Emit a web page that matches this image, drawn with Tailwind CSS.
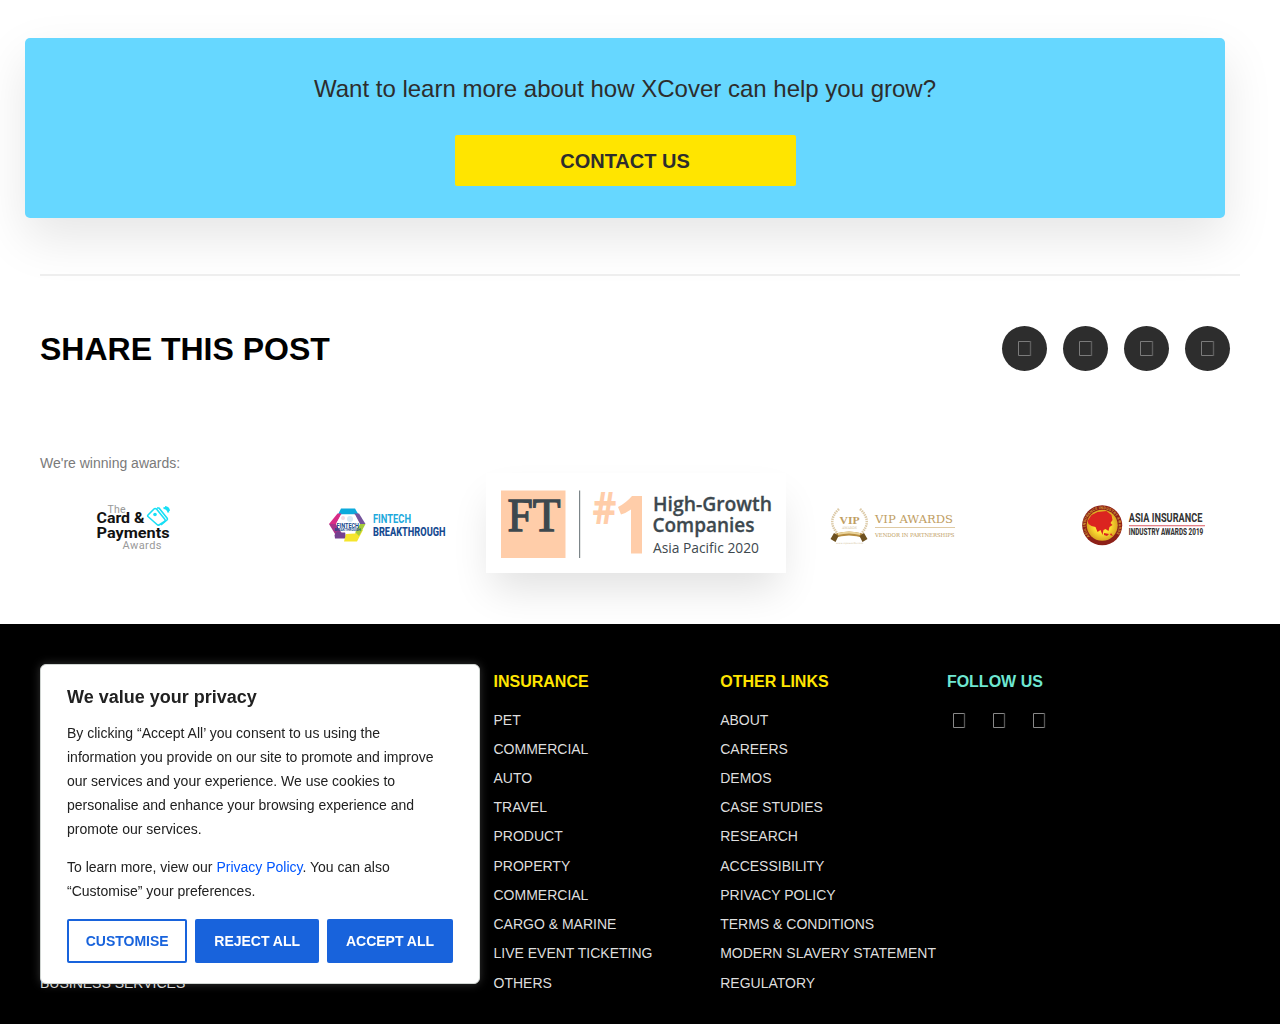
<!DOCTYPE html>
<html lang="en">
<head>
<meta charset="utf-8">
<title>XCover</title>
<script src="https://cdn.jsdelivr.net/npm/@tailwindcss/browser@4"></script>
</head>
<body class="relative h-[1024px] w-[1280px] overflow-hidden bg-white font-['Liberation_Sans',Arial,sans-serif] text-[#2d2d2d]">
<main class="h-[623.5px] pt-[38.4px]">
  <section class="ml-[25px] flex h-[180px] w-[1200px] flex-col items-center rounded-[5px] bg-[#66d7ff] pt-[33px] shadow-[0_20px_50px_rgba(0,0,0,0.1)]">
    <h3 class="text-2xl leading-9">Want to learn more about how XCover can help you grow?</h3>
    <a class="mt-[27.5px] flex h-[51px] w-[341px] items-center justify-center rounded-[2px] bg-[#ffe500] pt-px text-xl font-bold">CONTACT US</a>
  </section>
  <hr class="mx-10 mt-[55.6px] border-0 border-t-2 border-[#eee]">
  <section class="flex items-center justify-between pt-[50px] pr-[50px] pl-10">
    <h2 class="pt-px text-[32px] leading-[44px] font-bold text-black">SHARE THIS POST</h2>
    <div class="flex gap-4">
      <a class="size-[45px] rounded-full bg-[#2d2d2d]"><svg class="size-[45px]" fill="none" stroke="#7b7b7b"><path d="M28.500 15.500h-12v14h12"/><path d="M28.500 15v15" stroke="#5d5d5d" stroke-width="1.400"/></svg></a>
      <a class="size-[45px] rounded-full bg-[#2d2d2d]"><svg class="size-[45px]" fill="none" stroke="#7b7b7b"><path d="M28.500 15.500h-12v14h12"/><path d="M28.500 15v15" stroke="#5d5d5d" stroke-width="1.400"/></svg></a>
      <a class="size-[45px] rounded-full bg-[#2d2d2d]"><svg class="size-[45px]" fill="none" stroke="#7b7b7b"><path d="M28.500 15.500h-12v14h12"/><path d="M28.500 15v15" stroke="#5d5d5d" stroke-width="1.400"/></svg></a>
      <a class="size-[45px] rounded-full bg-[#2d2d2d]"><svg class="size-[45px]" fill="none" stroke="#7b7b7b"><path d="M28.500 15.500h-12v14h12"/><path d="M28.500 15v15" stroke="#5d5d5d" stroke-width="1.400"/></svg></a>
    </div>
  </section>
  <p class="mt-[82px] ml-10 text-sm leading-5 text-[#7a7a7a]">We're winning awards:</p>
  <section class="flex h-[100px] items-start">
    <svg class="mt-[17px] ml-20 h-[70px] w-[110px] shrink-0" viewBox="80 490 110 70" font-family="Roboto, sans-serif">
      <text x="107.500" y="512.500" font-size="10.500" fill="#999" textLength="18">The</text>
      <text x="96.500" y="523" font-size="15" font-weight="700" fill="#111" textLength="48" lengthAdjust="spacingAndGlyphs">Card &amp;</text>
      <text x="96.500" y="537.500" font-size="15" font-weight="700" fill="#111" textLength="73" lengthAdjust="spacingAndGlyphs">Payments</text>
      <text x="122.500" y="549" font-size="11" fill="#999" textLength="39">Awards</text>
      <g fill="none" stroke="#18dff5" stroke-width="1.600" stroke-linejoin="round">
        <path d="M148 515l6-6q1-1 2.500 0l8.500 10.500q.5 1-.5 2l-5.500 3.500q-1 .5-2-.5l-9-8q-.7-.8 0-1.500z"/>
        <path d="M157 508l2 0 8 10q.8 1.200 0 2l-6 5"/>
        <path d="M163.500 508q4 0 5 4.500M165 507q4 .5 4 4" stroke-width="1.800"/>
      </g><circle cx="155" cy="514.500" r="1.800" fill="#18dff5"/>
    </svg>
    <svg class="mt-[22px] ml-[130px] h-[60px] w-[140px] shrink-0" viewBox="320 495 140 60" font-family="Roboto, sans-serif">
      <path d="M341 508.500h14l3.500 6H338z" fill="#0caadc"/>
      <path d="M337.500 513.500h4L336 524h-7z" fill="#d82b86"/>
      <path d="M329 524h7l5 8-3.500 6z" fill="#a73388"/>
      <path d="M334.500 535l2.500-3.500h8l1 7-11 0z" fill="#754090"/>
      <path d="M346 534l9-.5 3-4.500 5 1-6 11.500H344z" fill="#f5e52c"/>
      <path d="M358 523l7.500 1-6.500 12-4-4z" fill="#a5cb3b"/>
      <path d="M354 513.500l5 0 6.500 10.500h-6z" fill="#74539c"/>
      <path d="M341.500 514.500h13.500l5 9.500-5 8.500h-13.500l-5.500-8.500z" fill="#fff"/>
      <circle cx="350" cy="519" r="3" fill="#d7e9f5"/><circle cx="343" cy="518" r="2" fill="#f5d9e4"/>
      <text x="336.500" y="527.500" font-size="6.500" font-weight="700" fill="#184a8d" textLength="22.500" lengthAdjust="spacingAndGlyphs">FINTECH</text>
      <text x="334.500" y="531.300" font-size="3.500" font-weight="700" fill="#184a8d" textLength="26" lengthAdjust="spacingAndGlyphs">BREAKTHROUGH</text>
      <text x="373" y="522.500" font-size="12.500" font-weight="700" fill="#20a9dc" textLength="38" lengthAdjust="spacingAndGlyphs">FINTECH</text>
      <text x="373" y="535.800" font-size="13" font-weight="800" fill="#164b91" textLength="72.500" lengthAdjust="spacingAndGlyphs">BREAKTHROUGH</text>
    </svg>
    <div class="ml-[26px] h-[100px] w-[300px] shrink-0 bg-white shadow-[0_22px_40px_-6px_rgba(0,0,0,0.12)]">
      <svg class="h-[100px] w-[300px]" viewBox="486 473 300 100" font-family="Open Sans, sans-serif" fill="#3d484e">
        <path d="M501 490.500h64.500V558H501z" fill="#ffcda9"/>
        <text x="507.500" y="530.500" font-family="Liberation Serif, serif" font-size="46" stroke="#3d484e" stroke-width="1.300" textLength="53" lengthAdjust="spacingAndGlyphs">FT</text>
        <path d="M579 490.500h1.200V558H579z" fill="#7c8589"/>
        <text x="592.500" y="524" font-size="45" font-weight="700" fill="#ffcda9" textLength="24" lengthAdjust="spacingAndGlyphs">#</text>
        <path d="M632 496h10v57.500h-11V509.500q-5 3.500-10 5l-3-7.500q8-4 14-11z" fill="#ffcda9"/>
        <text x="653" y="511" font-size="20" font-weight="600" stroke="#3d484e" stroke-width=".3" textLength="119" lengthAdjust="spacingAndGlyphs">High-Growth</text>
        <text x="652.500" y="532" font-size="20" font-weight="600" stroke="#3d484e" stroke-width=".3" textLength="102" lengthAdjust="spacingAndGlyphs">Companies</text>
        <text x="653" y="553" font-size="14.500" textLength="106" lengthAdjust="spacingAndGlyphs">Asia Pacific 2020</text>
      </svg>
    </div>
    <svg class="mt-[22px] ml-[34px] h-[60px] w-[150px] shrink-0" viewBox="820 495 150 60" font-family="DejaVu Serif, serif" fill="#c09d62">
      <g fill="none" stroke="#dccaa8" stroke-width="2.500" stroke-dasharray="1.500 .8"><path d="M839 509q-13 12-1 25M860 509q13 12 1 25"/></g>
      <text x="839.500" y="523.500" font-size="11" font-weight="700" font-family="Liberation Serif, serif" textLength="20" lengthAdjust="spacingAndGlyphs">VIP</text>
      <text x="842" y="528.500" font-size="3.500" textLength="15" lengthAdjust="spacingAndGlyphs" fill="#d3c09b">AWARDS</text>
      <path d="M834 534q15-5 30 0v4q-15-5-30 0z" fill="#b78d40"/><path d="M834 533l-3.500 6 5 3 3-6zM864 533l3.500 6-5 3-3-6z" fill="#6e5120"/>
      <path d="M838 533q11-3 22 0v2q-11-3-22 0z" fill="#ead49c"/>
      <text x="836" y="543.500" font-size="2.500" textLength="27" fill="#cbb487">www.vipawards.com</text>
      <text x="875" y="522.500" font-size="11.500" textLength="78" lengthAdjust="spacingAndGlyphs">VIP AWARDS</text>
      <path d="M875 527h80v.8h-80z" fill="#d4b984"/>
      <text x="875" y="537" font-size="5.500" textLength="79.500" lengthAdjust="spacingAndGlyphs">VENDOR IN PARTNERSHIPS</text>
    </svg>
    <svg class="mt-[22px] ml-[100px] h-[60px] w-[150px] shrink-0" viewBox="1070 495 150 60" font-family="Roboto, sans-serif" fill="#333">
      <defs>
        <path id="ring" d="M1089.800 536.500A16.500 16.500 0 1 1 1114.500 536.500"/>
        <radialGradient id="globe"><stop offset=".5" stop-color="#ffe435"/><stop offset="1" stop-color="#dba720"/></radialGradient>
      </defs>
      <circle cx="1102.200" cy="525.300" r="20" fill="#8d2018"/>
      <circle cx="1102.200" cy="525.300" r="15.500" fill="url(#globe)"/>
      <text font-size="3.800" font-weight="700" fill="#d19a37"><textPath href="#ring" textLength="72">ASIA INSURANCE INDUSTRY AWARDS</textPath></text>
      <path d="M1087.500 521l4-6 6-3 9-1 5 4 1 5-2 3 2 2-3 2-1 4-3-2-2 1-1 5-2-5-3 2-2-5-4-1-3-2z" fill="#db2420"/>
      <path d="M1104 533l5 1-2 2-3-1zM1111 533l2 3-3-1z" fill="#db2420"/>
      <text x="1128.800" y="522.300" font-size="12.500" font-weight="700" textLength="73.500" lengthAdjust="spacingAndGlyphs">ASIA INSURANCE</text>
      <path d="M1129 525.200h76v1h-76z" fill="#d95a62"/>
      <text x="1128.800" y="535" font-size="8.200" font-weight="800" textLength="74.500" lengthAdjust="spacingAndGlyphs">INDUSTRY AWARDS 2019</text>
    </svg>
  </section>
</main>
<footer class="flex h-[401px] bg-black px-10 pt-[46px] text-sm text-[#dedede]">
  <div class="flex w-[453.500px] items-start pt-[299px]"><a class="leading-[29.2px]">BUSINESS SERVICES</a></div>
  <div class="w-[226.700px]">
    <h4 class="h-9 text-base leading-6 font-bold text-[#ffe500]">INSURANCE</h4>
    <ul class="leading-[29.23px]">
      <li>PET</li><li>COMMERCIAL</li><li>AUTO</li><li>TRAVEL</li><li>PRODUCT</li><li>PROPERTY</li><li>COMMERCIAL</li><li>CARGO &amp; MARINE</li><li>LIVE EVENT TICKETING</li><li>OTHERS</li>
    </ul>
  </div>
  <div class="w-[226.700px]">
    <h4 class="h-9 text-base leading-6 font-bold text-[#ffe500]">OTHER LINKS</h4>
    <ul class="leading-[29.23px] whitespace-nowrap">
      <li>ABOUT</li><li>CAREERS</li><li>DEMOS</li><li>CASE STUDIES</li><li>RESEARCH</li><li>ACCESSIBILITY</li><li>PRIVACY POLICY</li><li>TERMS &amp; CONDITIONS</li><li>MODERN SLAVERY STATEMENT</li><li>REGULATORY</li>
    </ul>
  </div>
  <div>
    <h4 class="h-[35px] text-base leading-6 font-bold text-[#6ee7d2]">FOLLOW US</h4>
    <svg class="mt-1 h-6 w-[110px]" fill="none" stroke="#888"><path d="M17 4.500H6.500v14H17M57 4.500H46.500v14H57M97 4.500H86.500v14H97"/><path d="M17.500 4v15M57.500 4v15M97.500 4v15" stroke="#555" stroke-width="1.300"/></svg>
  </div>
</footer>
<aside class="fixed top-[664px] left-10 h-[320px] w-[440px] rounded-md border border-[#d0d5d2] bg-white px-[26px] pt-5 text-sm leading-6 text-[#212121] shadow-[0_0_10px_#acabab4d]">
  <h2 class="text-lg leading-6 font-bold">We value your privacy</h2>
  <p class="mt-3">By clicking “Accept All’ you consent to us using the<br>information you provide on our site to promote and improve<br>our services and your experience. We use cookies to<br>personalise and enhance your browsing experience and<br>promote our services.</p>
  <p class="mt-3.5">To learn more, view our <a class="text-[#0056ff]">Privacy Policy</a>. You can also<br>“Customise” your preferences.</p>
  <div class="mt-4 flex gap-2 font-bold text-white">
    <button class="h-11 w-[120.400px] rounded-[2px] border-2 border-[#1863dc] text-[#1863dc]">CUSTOMISE</button>
    <button class="h-11 w-[123.600px] rounded-[2px] bg-[#1863dc]">REJECT ALL</button>
    <button class="h-11 w-[126px] rounded-[2px] bg-[#1863dc]">ACCEPT ALL</button>
  </div>
</aside>
</body>
</html>
